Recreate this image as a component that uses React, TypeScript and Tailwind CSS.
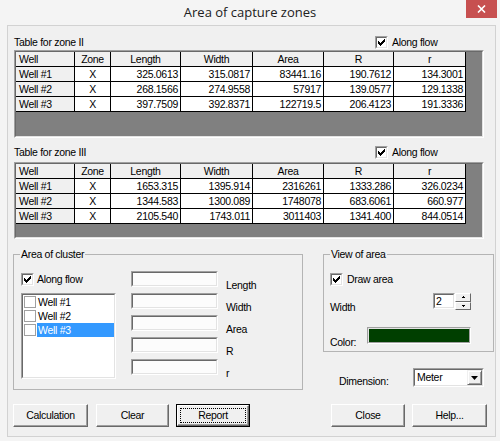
import React from 'react';

const colW = ['w-[59px]', 'w-[36px]', 'w-[70px]', 'w-[72px]', 'w-[71px]', 'w-[70px]', 'w-[72px]'];
const headers = ['Well', 'Zone', 'Length', 'Width', 'Area', 'R', 'r'];

const zone2 = [
  ['Well #1', 'X', '325.0613', '315.0817', '83441.16', '190.7612', '134.3001'],
  ['Well #2', 'X', '268.1566', '274.9558', '57917', '139.0577', '129.1338'],
  ['Well #3', 'X', '397.7509', '392.8371', '122719.5', '206.4123', '191.3336'],
];

const zone3 = [
  ['Well #1', 'X', '1653.315', '1395.914', '2316261', '1333.286', '326.0234'],
  ['Well #2', 'X', '1344.583', '1300.089', '1748078', '683.6061', '660.977'],
  ['Well #3', 'X', '2105.540', '1743.011', '3011403', '1341.400', '844.0514'],
];

function Check({ checked }: { checked?: boolean }) {
  return (
    <span className="w-[13px] h-[13px] shrink-0 bg-white border border-[#a0a0a0] border-b-white border-r-white flex">
      <span className="flex-1 border border-[#696969] border-b-[#e3e3e3] border-r-[#e3e3e3] flex items-center justify-center">
        {checked && (
          <svg width="7" height="7" viewBox="0 0 7 7" shapeRendering="crispEdges">
            <path d="M6 0h1v3h-1v1h-1v1h-1v1h-1v1h-1v-1h-1v-1h-1v-3h1v1h1v1h1v-1h1v-1h1z" fill="#000" />
          </svg>
        )}
      </span>
    </span>
  );
}

function Grid({ rows, h }: { rows: string[][]; h: string }) {
  return (
    <div className={`ml-[6px] w-[470px] ${h} border border-[#a0a0a0] border-b-white border-r-white flex`}>
      <div className="flex-1 border border-[#696969] border-b-[#e3e3e3] border-r-[#e3e3e3] bg-[#808080] flex flex-col">
        <div className="flex">
          {headers.map((t, i) => (
            <div
              key={t}
              className={`${colW[i]} h-[15px] shrink-0 border-r border-b border-black bg-[#f0f0f0] leading-[14px] ${
                i === 0 ? 'pl-[3px]' : 'text-center'
              }`}
            >
              {t}
            </div>
          ))}
        </div>
        {rows.map((r) => (
          <div key={r[0]} className="flex">
            {r.map((c, i) => (
              <div
                key={i}
                className={`${colW[i]} h-[15px] shrink-0 border-r border-b border-black leading-[14px] ${
                  i === 0 ? 'bg-[#f0f0f0] pl-[3px]' : i === 1 ? 'bg-white text-center' : 'bg-white text-right pr-[2px]'
                }`}
              >
                {c}
              </div>
            ))}
          </div>
        ))}
      </div>
    </div>
  );
}

function Sunken({ className, children }: { className: string; children?: React.ReactNode }) {
  return (
    <div className={`${className} shrink-0 border border-[#a0a0a0] border-b-white border-r-white flex`}>
      <div className="flex-1 min-w-0 border border-[#696969] border-b-[#e3e3e3] border-r-[#e3e3e3] bg-white flex">
        {children}
      </div>
    </div>
  );
}

function Button({ className, label }: { className: string; label: string }) {
  return (
    <div
      className={`${className} h-[23px] shrink-0 bg-[#f0f0f0] border border-white border-b-[#696969] border-r-[#696969] shadow-[inset_-1px_-1px_0_#a0a0a0] flex items-center justify-center`}
    >
      {label}
    </div>
  );
}

export default function App() {
  return (
    <div className="w-[500px] h-[441px] overflow-hidden bg-[#f4f4f4] font-['Liberation_Sans',Arial,sans-serif] text-[10.5px] tracking-[-0.3px] leading-[13px] text-black flex flex-col">
      <div className="h-[25px] shrink-0 grid grid-cols-[1fr_auto_1fr] items-start">
        <div />
        <div className="pt-[3px] font-['Open_Sans',sans-serif] text-[13px] tracking-normal leading-[18px] text-[#202020]">
          Area of capture zones
        </div>
        <div className="flex justify-end pr-[3px]">
          <div className="w-[31px] h-[18px] bg-[#c75050] flex items-center justify-center">
            <svg width="9" height="8" viewBox="0 0 9 8">
              <path d="M1 0.5L8 7.5M8 0.5L1 7.5" stroke="#fff" strokeWidth="1.6" />
            </svg>
          </div>
        </div>
      </div>

      <div className="ml-[7px] w-[489px] h-[412px] shrink-0 border border-[#d2d2d2] bg-[#f0f0f0] flex flex-col">
        <div className="mt-[10px] h-[13px] pl-[6px] flex items-center">
          <span className="w-[361px] shrink-0">Table for zone II</span>
          <Check checked />
          <span className="ml-[4px]">Along flow</span>
        </div>
        <div className="mt-[1px]">
          <Grid rows={zone2} h="h-[88px]" />
        </div>

        <div className="mt-[8px] h-[13px] pl-[6px] flex items-center">
          <span className="w-[361px] shrink-0">Table for zone III</span>
          <Check checked />
          <span className="ml-[4px]">Along flow</span>
        </div>
        <div className="mt-[3px]">
          <Grid rows={zone3} h="h-[77px]" />
        </div>

        <div className="mt-[9px] flex items-start">
          <fieldset className="ml-[5px] w-[290px] h-[142px] border border-[#b4b4b4]">
            <legend className="ml-[6px] px-[1px] leading-[13px]">Area of cluster</legend>
            <div className="flex">
              <div className="ml-[7px] flex flex-col">
                <div className="mt-[12px] h-[13px] flex items-center">
                  <Check checked />
                  <span className="ml-[3px]">Along flow</span>
                </div>
                <Sunken className="mt-[7px] w-[95px] h-[86px]">
                  <div className="flex-1 flex flex-col">
                    {['Well #1', 'Well #2', 'Well #3'].map((w, i) => (
                      <div key={w} className="h-[14px] flex items-center">
                        <span className="ml-[1px] w-[12px] h-[12px] border border-[#a0a0a0] bg-white shrink-0" />
                        <span
                          className={`ml-[1px] flex-1 h-[14px] pl-[1px] leading-[14px] ${
                            i === 2 ? 'bg-[#3399ff] text-white' : ''
                          }`}
                        >
                          {w}
                        </span>
                      </div>
                    ))}
                  </div>
                </Sunken>
              </div>
              <div className="ml-[15px] mt-[10px] flex flex-col">
                {['Length', 'Width', 'Area', 'R', 'r'].map((l) => (
                  <div key={l} className="h-[22px] flex items-start">
                    <Sunken className="w-[87px] h-[16px]">
                      <div className="flex-1 bg-[#fcfcfc]" />
                    </Sunken>
                    <span className="ml-[8px] pt-[8px]">{l}</span>
                  </div>
                ))}
              </div>
            </div>
          </fieldset>

          <div className="ml-[20px] flex flex-col">
            <fieldset className="w-[171px] h-[104px] border border-[#b4b4b4]">
              <legend className="ml-[6px] px-[1px] leading-[13px]">View of area</legend>
              <div className="ml-[6px] flex flex-col">
                <div className="mt-[12px] h-[13px] flex items-center">
                  <Check checked />
                  <span className="ml-[4px]">Draw area</span>
                </div>
                <div className="mt-[7px] flex items-start">
                  <span className="w-[103px] shrink-0 pt-[8px]">Width</span>
                  <Sunken className="w-[22px] h-[16px]">
                    <span className="pl-[1px] leading-[12px]">2</span>
                  </Sunken>
                  <div className="w-[16px] h-[17px] flex flex-col">
                    {[0, 1].map((k) => (
                      <div
                        key={k}
                        className="flex-1 bg-[#f0f0f0] border border-white border-b-[#696969] border-r-[#696969] flex items-center justify-center"
                      >
                        <svg width="3" height="2" viewBox="0 0 3 2">
                          <path d={k === 0 ? 'M1 0h1v1h1v1H0V1h1z' : 'M0 0h3v1H2v1H1V1H0z'} fill="#000" />
                        </svg>
                      </div>
                    ))}
                  </div>
                </div>
                <div className="mt-[13px] flex items-start">
                  <span className="w-[37px] shrink-0 pt-[9px]">Color:</span>
                  <div className="w-[104px] h-[17px] border border-[#a0a0a0] border-b-white border-r-white flex">
                    <div className="flex-1 bg-[#003f00] border border-[#e3e3e3] border-b-[#a0a0a0] border-r-[#a0a0a0]" />
                  </div>
                </div>
              </div>
            </fieldset>
            <div className="mt-[16px] ml-[16px] flex items-start">
              <span className="w-[74px] shrink-0 pt-[7px]">Dimension:</span>
              <Sunken className="w-[71px] h-[19px]">
                <span className="flex-1 pl-[2px] leading-[15px]">Meter</span>
                <div className="w-[15px] bg-[#f0f0f0] border border-[#f0f0f0] border-b-[#696969] border-r-[#696969] shadow-[inset_1px_1px_0_#fff,inset_-1px_-1px_0_#a0a0a0] flex items-center justify-center">
                  <svg width="7" height="4" viewBox="0 0 7 4">
                    <path d="M0 0h7L3.5 4z" fill="#000" />
                  </svg>
                </div>
              </Sunken>
            </div>
          </div>
        </div>

        <div className="mt-[14px] ml-[5px] flex">
          <Button className="w-[75px]" label="Calculation" />
          <Button className="ml-[8px] w-[73px]" label="Clear" />
          <div className="ml-[7px] w-[74px] h-[23px] shrink-0 bg-[#f0f0f0] border border-black flex">
            <div className="flex-1 border border-white border-b-[#696969] border-r-[#696969] shadow-[inset_-1px_-1px_0_#a0a0a0] flex p-[2px]">
              <div className="flex-1 border border-dotted border-black flex items-center justify-center">Report</div>
            </div>
          </div>
          <Button className="ml-[81px] w-[74px]" label="Close" />
          <Button className="ml-[7px] w-[75px]" label="Help..." />
        </div>
      </div>
    </div>
  );
}
